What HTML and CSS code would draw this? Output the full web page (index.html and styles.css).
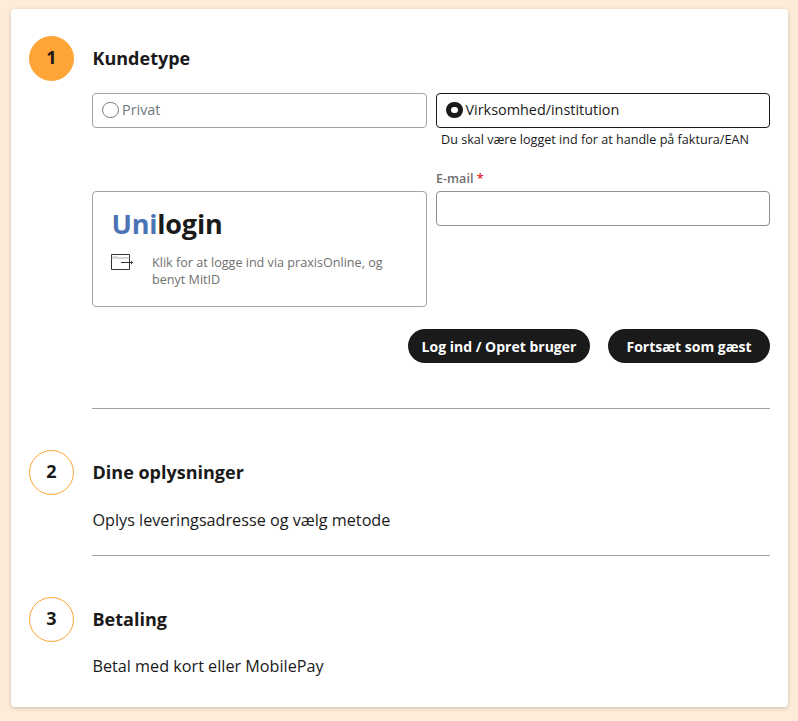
FILE: index.html
```html
<!DOCTYPE html>
<html lang="da">
<head>
<meta charset="utf-8">
<title>Kassen</title>
<link rel="stylesheet" href="styles.css">
</head>
<body>
<main class="card">
  <section class="step step-first">
    <div class="step-head">
      <div class="badge badge-active">1</div>
      <h2 class="step-title">Kundetype</h2>
    </div>
    <div class="step-body">
      <div class="form-grid">
        <div class="col">
          <label class="option">
            <span class="radio"></span><span class="option-text">Privat</span>
          </label>
          <a class="unilogin">
            <div class="uni-logo"><span class="uni-blue">Uni</span>login</div>
            <div class="uni-row">
              <svg class="uni-icon" width="22" height="16" viewBox="0 0 22 16" fill="none">
                <path d="M18.500 8V0.500H0.500V15.500H18.500V9" stroke="#333" stroke-width="1"/>
                <path d="M0.500 4H18.500" stroke="#aaa" stroke-width="1"/>
                <path d="M2 2.500H3.500M4.500 2.500H6" stroke="#bbb" stroke-width="1"/>
                <path d="M10 8.500H20.500" stroke="#333" stroke-width="1"/>
                <path d="M20 6.500L22 8.500L20 10.500Z" fill="#333"/>
              </svg>
              <p class="uni-text">Klik for at logge ind via praxisOnline, og benyt MitID</p>
            </div>
          </a>
        </div>
        <div class="col">
          <label class="option option-selected">
            <span class="radio radio-on"></span><span class="option-text">Virksomhed/institution</span>
          </label>
          <p class="note">Du skal være logget ind for at handle på faktura/EAN</p>
          <label class="field-label" for="email">E-mail <span class="req">*</span></label>
          <input class="field" id="email" type="text">
        </div>
      </div>
      <div class="actions">
        <button class="btn btn-login">Log ind / Opret bruger</button>
        <button class="btn btn-guest">Fortsæt som gæst</button>
      </div>
      <hr class="rule rule-first">
    </div>
  </section>
  <section class="step step-second">
    <div class="step-head">
      <div class="badge">2</div>
      <h2 class="step-title">Dine oplysninger</h2>
    </div>
    <div class="step-body">
      <p class="step-text">Oplys leveringsadresse og vælg metode</p>
      <hr class="rule rule-second">
    </div>
  </section>
  <section class="step step-third">
    <div class="step-head">
      <div class="badge">3</div>
      <h2 class="step-title">Betaling</h2>
    </div>
    <div class="step-body">
      <p class="step-text step-text-last">Betal med kort eller MobilePay</p>
    </div>
  </section>
</main>
</body>
</html>
```
FILE: styles.css
```css
* { box-sizing: border-box; }
html, body { height: 100%; }
body {
  margin: 0;
  padding: 9px 10px 14px 11px;
  background: #feecd9;
  font-family: "Open Sans", sans-serif;
  color: #1a1a1a;
  overflow: hidden;
}
.card {
  height: 698px;
  background: #fff;
  border-radius: 4px;
  box-shadow: 0 1px 4px rgba(0,0,0,.2);
  padding: 27px 18px 0;
}
.step-head { display: flex; align-items: center; gap: 18px; }
.badge {
  width: 45px;
  height: 45px;
  flex: none;
  border-radius: 50%;
  border: 1px solid #ffa436;
  display: flex;
  align-items: center;
  justify-content: center;
  font-size: 18px;
  font-weight: 700;
  padding-bottom: 3px;
  color: #1a1a1a;
}
.badge-active { background: #ffa436; }
.step-title {
  margin: 0 0 2px 0.5px;
  font-size: 18px;
  font-weight: 700;
  line-height: 24px;
  color: #1a1a1a;
}
.step-body { margin-left: 63px; }
.form-grid {
  margin-top: 12px;
  display: grid;
  grid-template-columns: 335px 334px;
  column-gap: 9px;
}
.col { display: flex; flex-direction: column; }
.option {
  height: 35px;
  border: 1px solid #a3a3a3;
  border-radius: 4px;
  display: flex;
  align-items: center;
  padding-left: 9px;
  gap: 3px;
  font-size: 14.400px;
  color: #6f7780;
}
.option-text { margin-bottom: 2px; margin-left: 0.5px; }
.option-selected { border-color: #1a1a1a; color: #1a1a1a; }
.option-selected .option-text { margin-left: 0; }
.radio { width: 16.500px; height: 16.500px; border: 1.500px solid #808080; border-radius: 50%; flex: none; margin-bottom: 1px; }
.radio-on { border: 5px solid #1a1a1a; background: #fff; }
.unilogin {
  margin-top: 63px;
  height: 116px;
  border: 1px solid #a3a3a3;
  border-radius: 4px;
  padding: 13px 18px 0 18px;
  display: block;
}
.uni-logo { font-size: 27px; font-weight: 700; line-height: 38px; color: #1a1a1a; letter-spacing: -0.2px; margin-left: 0.5px; }
.uni-blue { color: #4a74b4; }
.uni-row { display: flex; align-items: flex-start; margin-top: 11px; }
.uni-icon { flex: none; margin-top: 0; }
.uni-text {
  margin: 0 0 0 19px;
  font-size: 12.600px;
  line-height: 17px;
  color: #6f6f6f;
  width: 250px;
}
.note { margin: 3px 0 0 5px; font-size: 12.600px; line-height: 18px; color: #1a1a1a; }
.field-label {
  margin-top: 21px;
  font-size: 12.600px;
  font-weight: 600;
  line-height: 18px;
  color: #6f6f6f;
}
.req { color: #e01b24; }
.field {
  display: block;
  width: 100%;
  height: 35px;
  margin-top: 3px;
  border: 1px solid #8f8f8f;
  border-radius: 4px;
  background: #fff;
}
.actions { margin-top: 22px; display: flex; justify-content: flex-end; gap: 18px; }
.btn {
  height: 34px;
  border: 0;
  border-radius: 17px;
  background: #1a1a1a;
  color: #fff;
  font-family: inherit;
  font-size: 14px;
  font-weight: 700;
  padding: 0;
}
.btn-login { width: 182px; }
.btn-guest { width: 162px; }
.rule { margin: 0; border: 0; border-top: 1px solid #a3a3a3; }
.rule-first { margin-top: 45px; }
.rule-second { margin-top: 23px; }
.step-second { margin-top: 41px; }
.step-third { margin-top: 41px; }
.step-text { margin: 13px 0 0 0.5px; font-size: 16.200px; line-height: 24px; color: #1a1a1a; }
.step-text-last { margin-top: 12px; }
```
